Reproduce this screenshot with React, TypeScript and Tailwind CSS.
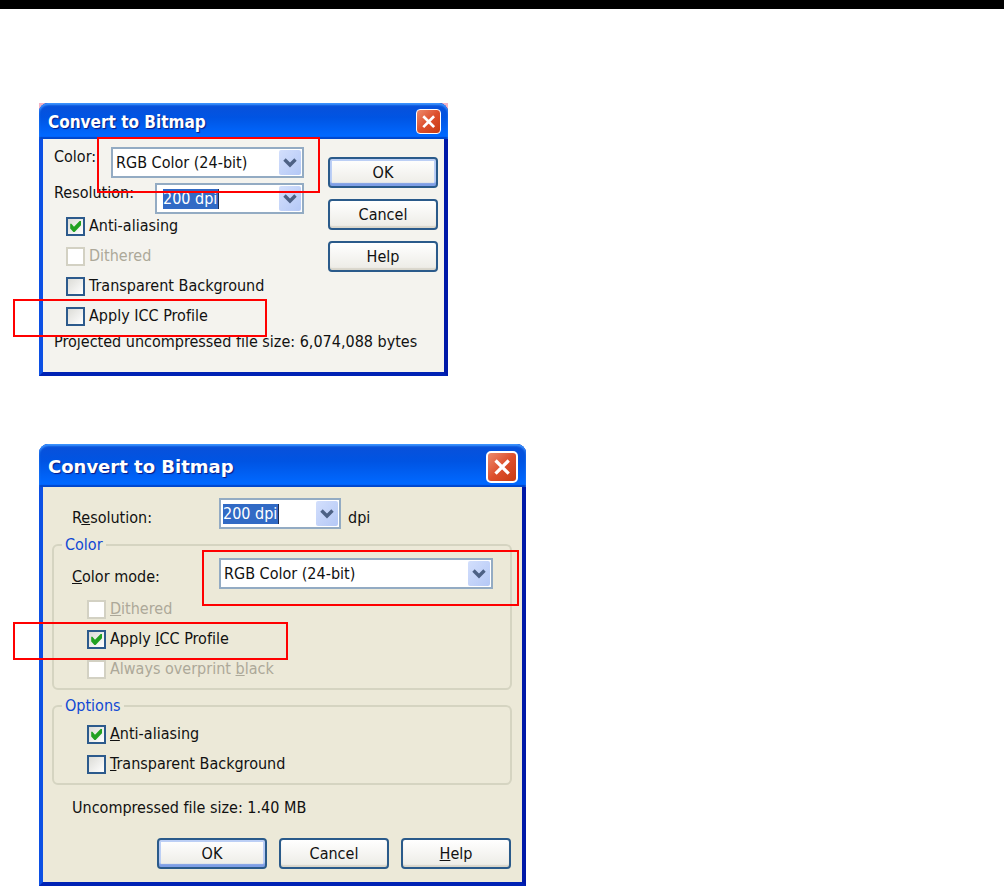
import type { ReactNode } from "react";

type Tone = "soft" | "crisp";

function Chevron() {
  return (
    <svg viewBox="0 0 14 10" className="h-[10px] w-[14px]" aria-hidden="true">
      <path d="M1.5 1.5 L7 7 L12.5 1.5" fill="none" stroke="#4d6185" strokeWidth="3.4" />
    </svg>
  );
}

const comboFrame = "grid h-[31px] grid-cols-[1fr_auto] items-center border-2 border-[#93abc3] bg-white";
const arrowFace =
  "grid h-[25px] w-[22px] place-items-center rounded-[2px] bg-linear-to-br from-[#d3dffc] to-[#b4c8f6]";

function ColorSelect({ id, className }: { id: string; className: string }) {
  return (
    <div className={`${comboFrame} ${className}`}>
      <select
        id={id}
        className="col-span-2 col-start-1 row-start-1 h-full w-full appearance-none bg-transparent pl-[3px] outline-none"
      >
        <option>RGB Color (24-bit)</option>
      </select>
      <span className={`${arrowFace} pointer-events-none col-start-2 row-start-1 mr-px`}>
        <Chevron />
      </span>
    </div>
  );
}

function DpiCombo({ id, className }: { id: string; className: string }) {
  return (
    <div className={`${comboFrame} ${className}`}>
      <input
        id={id}
        type="text"
        defaultValue="200 dpi"
        className="h-5 w-14 border-r border-[#1d2b50] bg-[#316ac5] text-white outline-none"
      />
      <button type="button" aria-label="Choose resolution" className={`${arrowFace} mr-px`}>
        <Chevron />
      </button>
    </div>
  );
}

function Tick({
  id,
  checked = false,
  disabled = false,
  children,
}: {
  id: string;
  checked?: boolean;
  disabled?: boolean;
  children: ReactNode;
}) {
  return (
    <div className="flex h-5 items-center gap-1">
      <span className="grid place-items-center">
        <input
          id={id}
          type="checkbox"
          defaultChecked={checked}
          disabled={disabled}
          className="peer col-start-1 row-start-1 size-[19px] appearance-none border-2 border-[#2c5a8c] bg-linear-to-br from-[#dcdcd7] to-white disabled:border-[#d3d1c3] disabled:from-white"
        />
        <svg
          viewBox="0 0 19 19"
          aria-hidden="true"
          className="pointer-events-none col-start-1 row-start-1 hidden size-[19px] peer-checked:block"
        >
          <path d="M4.2 6.8 L5.4 6.8 L8 9.8 L13.6 4 L15 4 L15 8.2 L8.6 15 L7.4 15 L4.2 11.4 Z" fill="#21a121" />
        </svg>
      </span>
      <label htmlFor={id} className={disabled ? "text-[#aca899]" : ""}>
        {children}
      </label>
    </div>
  );
}

function PushButton({ primary = false, children }: { primary?: boolean; children: ReactNode }) {
  return (
    <button
      type="button"
      className={`h-[31px] w-[110px] rounded-[4px] border-2 border-[#2a5a8a] bg-linear-to-b from-white to-[#ecebe5] ${
        primary ? "shadow-[inset_0_-3px_1px_#7f9fe6,inset_0_0_0_2px_#bccff5]" : "shadow-[inset_0_-2px_1px_#d9d6cb]"
      }`}
    >
      {children}
    </button>
  );
}

function CloseButton({ className }: { className: string }) {
  return (
    <button
      type="button"
      aria-label="Close"
      className={`grid place-items-center border-white bg-linear-to-br from-[#ec8a6c] via-[#dd4f2c] to-[#c93a10] ${className}`}
    >
      <svg viewBox="0 0 16 16" className="size-[58%]" aria-hidden="true">
        <path d="M1.5 1.5 L14.5 14.5 M14.5 1.5 L1.5 14.5" stroke="#fff" strokeWidth="3.2" />
      </svg>
    </button>
  );
}

function Dialog({
  tone,
  className,
  bar,
  close,
  children,
}: {
  tone: Tone;
  className: string;
  bar: string;
  close: string;
  children: ReactNode;
}) {
  return (
    <section
      className={`rounded-t-[9px] border-x-4 border-b-4 border-l-[#0c50e4] border-r-[#0019a8] border-b-[#0022b4] bg-[#0050e0] ${className}`}
    >
      <header
        className={`-mx-1 flex items-center justify-between rounded-t-[9px] bg-linear-to-b from-[#0a50d8] from-0% via-[#0054e3] via-40% to-[#0068ff] to-90% pl-[9px] font-bold text-white shadow-[inset_0_2px_2px_#3d95ff,inset_0_-2px_1px_#0047cc] [text-shadow:1px_1px_1px_#0a1883] ${bar}`}
      >
        <h2>Convert to Bitmap</h2>
        <CloseButton className={close} />
      </header>
      <div className={tone === "soft" ? "bg-[#f4f3ee]" : "bg-[#ece9d8]"}>{children}</div>
    </section>
  );
}

function Group({ title, children }: { title: string; children: ReactNode }) {
  return (
    <fieldset className="mt-[6px] mr-[10px] ml-[9px] rounded-[6px] border-2 border-[#d5d4c1] pr-2 pb-[9px] pl-2">
      <legend className="h-5 px-[3px] text-[#1048d4]">{title}</legend>
      <div className="pl-[10px]">{children}</div>
    </fieldset>
  );
}

function Marker({ className }: { className: string }) {
  return <div aria-hidden="true" className={`pointer-events-none absolute border-2 border-[#ff0000] ${className}`} />;
}

export default function App() {
  return (
    <main className="bg-white font-['DejaVu_Sans_Condensed','Noto_Sans',sans-serif] text-[16px] leading-5 text-[#111] [font-variant-ligatures:none]">
      <div className="h-[9px] bg-black" />

      <div className="flex flex-col items-start gap-[68px] pt-[94px] pl-[39px]">
        <div className="relative bg-[#f3b3c4]">
          <Dialog tone="soft" className="w-[409px]" bar="h-9 pr-[7px] pt-px text-[17px]" close="size-[25px] rounded-[4px] border">
            <div className="flex justify-between pr-[6px] pl-[11px]">
              <div className="pt-2">
                <div className="flex items-start">
                  <label htmlFor="color-a" className="w-[57px]">
                    Color:
                  </label>
                  <ColorSelect id="color-a" className="w-[193px]" />
                </div>
                <div className="mt-[5px] flex items-start">
                  <label htmlFor="dpi-a" className="w-[101px]">
                    Resolution:
                  </label>
                  <DpiCombo id="dpi-a" className="w-[149px] pl-[6px]" />
                </div>
                <div className="mt-[2px] flex flex-col gap-[10px] pl-3">
                  <Tick id="aa-a" checked>
                    Anti-aliasing
                  </Tick>
                  <Tick id="dither-a" disabled>
                    Dithered
                  </Tick>
                  <Tick id="trans-a">Transparent Background</Tick>
                  <Tick id="icc-a">Apply ICC Profile</Tick>
                </div>
              </div>
              <div className="flex flex-col gap-[11px] pt-[18px]">
                <PushButton primary>OK</PushButton>
                <PushButton>Cancel</PushButton>
                <PushButton>Help</PushButton>
              </div>
            </div>
            <p className="pt-[6px] pb-5 pl-[11px]">Projected uncompressed file size: 6,074,088 bytes</p>
          </Dialog>
          <Marker className="top-[34px] left-[58px] h-14 w-[223px]" />
          <Marker className="top-[196px] -left-[26px] h-[38px] w-[254px]" />
        </div>

        <div className="relative">
          <Dialog
            tone="crisp"
            className="w-[487px]"
            bar="h-[43px] pr-2 pt-[3px] font-['DejaVu_Sans',sans-serif] text-[18px]"
            close="size-8 rounded-[5px] border-2"
          >
            <div className="flex items-end pt-[11px] pl-[29px]">
              <label htmlFor="dpi-b" className="w-[147px] pb-px">
                R<u>e</u>solution:
              </label>
              <DpiCombo id="dpi-b" className="w-[122px] pl-[2px]" />
              <span className="pb-px pl-[7px]">dpi</span>
            </div>

            <Group title="Color">
              <div className="flex items-end pt-[3px]">
                <label htmlFor="color-b" className="w-[147px] pb-[2px]">
                  <u>C</u>olor mode:
                </label>
                <ColorSelect id="color-b" className="w-[274px]" />
              </div>
              <div className="flex flex-col gap-[10px] pt-[10px] pl-[15px]">
                <Tick id="dither-b" disabled>
                  <u>D</u>ithered
                </Tick>
                <Tick id="icc-b" checked>
                  Apply <u>I</u>CC Profile
                </Tick>
                <Tick id="overprint-b" disabled>
                  Always overprint <u>b</u>lack
                </Tick>
              </div>
            </Group>

            <Group title="Options">
              <div className="flex flex-col gap-[10px] pt-2 pl-[15px]">
                <Tick id="aa-b" checked>
                  <u>A</u>nti-aliasing
                </Tick>
                <Tick id="trans-b">
                  <u>T</u>ransparent Background
                </Tick>
              </div>
            </Group>

            <p className="pt-[13px] pl-[29px]">Uncompressed file size: 1.40 MB</p>
            <div className="flex justify-end gap-3 pt-5 pr-[11px] pb-[13px]">
              <PushButton primary>OK</PushButton>
              <PushButton>Cancel</PushButton>
              <PushButton>
                <u>H</u>elp
              </PushButton>
            </div>
          </Dialog>
          <Marker className="top-[106px] left-[163px] h-14 w-[317px]" />
          <Marker className="top-[178px] -left-[26px] h-[38px] w-[275px]" />
        </div>
      </div>
    </main>
  );
}
